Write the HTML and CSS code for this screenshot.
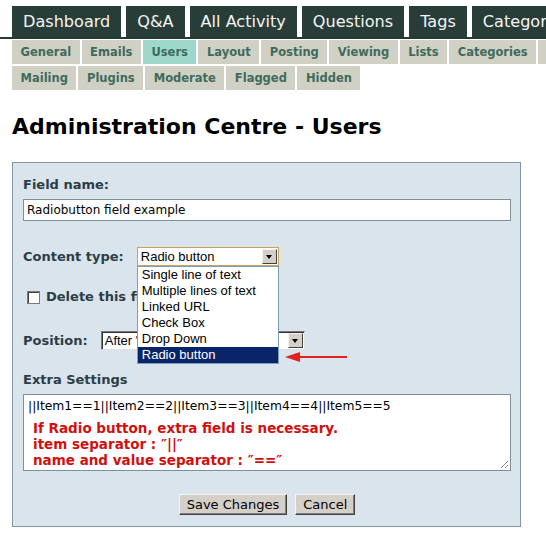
FILE: index.html
```html
<!DOCTYPE html>
<html lang="en">
<head>
    <meta charset="UTF-8">
    <meta name="viewport" content="width=device-width, initial-scale=1.0">
    <title>Administration Centre - Users</title>
    <link rel="stylesheet" href="styles.css">
</head>
<body>
    <nav class="main-nav">
        <a class="main-tab" href="#">Dashboard</a>
        <a class="main-tab" href="#">Q&amp;A</a>
        <a class="main-tab" href="#">All Activity</a>
        <a class="main-tab" href="#">Questions</a>
        <a class="main-tab" href="#">Tags</a>
        <a class="main-tab" href="#">Categories</a>
        <a class="main-tab" href="#">Users</a>
    </nav>

    <nav class="admin-nav">
        <div class="admin-row">
            <a class="admin-tab" href="#">General</a>
            <a class="admin-tab" href="#">Emails</a>
            <a class="admin-tab active" href="#">Users</a>
            <a class="admin-tab" href="#">Layout</a>
            <a class="admin-tab" href="#">Posting</a>
            <a class="admin-tab" href="#">Viewing</a>
            <a class="admin-tab" href="#">Lists</a>
            <a class="admin-tab" href="#">Categories</a>
            <a class="admin-tab" href="#">Permissions</a>
            <a class="admin-tab" href="#">Pages</a>
        </div>
        <div class="admin-row">
            <a class="admin-tab" href="#">Mailing</a>
            <a class="admin-tab" href="#">Plugins</a>
            <a class="admin-tab" href="#">Moderate</a>
            <a class="admin-tab" href="#">Flagged</a>
            <a class="admin-tab" href="#">Hidden</a>
        </div>
    </nav>

    <h1 class="page-title">Administration Centre - Users</h1>

    <form class="field-form">
        <label class="field-label" for="fieldName">Field name:</label>
        <input id="fieldName" class="text-input" type="text" value="Radiobutton field example">

        <div class="form-row type-row">
            <span class="field-label">Content type:</span>
            <div class="dropdown">
                <div class="select select-focused">
                    <span class="select-value">Radio button</span>
                    <span class="select-arrow"></span>
                </div>
                <ul class="dropdown-list">
                    <li>Single line of text</li>
                    <li>Multiple lines of text</li>
                    <li>Linked URL</li>
                    <li>Check Box</li>
                    <li>Drop Down</li>
                    <li class="selected">Radio button</li>
                </ul>
                <svg class="pointer-arrow" width="64" height="18" viewBox="0 0 64 18">
                    <line x1="12" y1="9" x2="62" y2="9" stroke="#e3201c" stroke-width="2"/>
                    <polygon points="0,9 15,4 15,14" fill="#e3201c"/>
                </svg>
            </div>
        </div>

        <label class="form-row check-row">
            <input type="checkbox" class="checkbox">
            <span>Delete this field</span>
        </label>

        <div class="form-row position-row">
            <span class="field-label">Position:</span>
            <div class="select select-wide">
                <span class="select-value">After "Radiobutton field"</span>
                <span class="select-arrow"></span>
            </div>
        </div>

        <div class="field-label extra-label">Extra Settings</div>
        <div class="textarea">
            <div class="textarea-line">||Item1==1||Item2==2||Item3==3||Item4==4||Item5==5</div>
            <p class="note">
                If Radio button, extra field is necessary.<br>
                item separator : ″||″<br>
                name and value separator : ″==″
            </p>
            <svg class="resize-grip" width="10" height="10" viewBox="0 0 10 10">
                <line x1="9" y1="2" x2="2" y2="9" stroke="#8a8a8a"/>
                <line x1="9" y1="6" x2="6" y2="9" stroke="#8a8a8a"/>
            </svg>
        </div>

        <div class="actions">
            <button type="submit" class="btn">Save Changes</button>
            <button type="button" class="btn">Cancel</button>
        </div>
    </form>
</body>
</html>
```

FILE: styles.css
```css
html,
body {
    overflow: hidden;
}

body {
    margin: 0;
    font-family: "DejaVu Sans", Verdana, sans-serif;
    background: #fff;
    color: #000;
}

/* top navigation */
.main-nav {
    display: flex;
    gap: 5px;
    padding: 6px 0 0 12px;
    border-bottom: 2px solid #263a35;
    white-space: nowrap;
}

.main-tab {
    flex: none;
    height: 31px;
    line-height: 31px;
    padding: 0 11px;
    background: #283d38;
    color: #f4f4f4;
    font-size: 16.1px;
    text-decoration: none;
}

/* admin sub navigation */
.admin-nav {
    display: flex;
    flex-direction: column;
    gap: 2px;
    margin-top: 1px;
    padding-left: 12px;
}

.admin-row {
    display: flex;
    gap: 2px;
    white-space: nowrap;
}

.admin-tab {
    flex: none;
    height: 24px;
    line-height: 24px;
    padding: 0 8.5px;
    background: #d0d0c5;
    color: #3e6b5c;
    font-size: 11.5px;
    font-weight: bold;
    text-decoration: none;
}

.admin-tab.active {
    background: #9ed8cb;
}

.page-title {
    margin: 24px 0 22px 12px;
    font-size: 22px;
    line-height: 26px;
}

/* field editor box */
.field-form {
    width: 509px;
    box-sizing: border-box;
    margin-left: 12px;
    padding: 13px 9px 11px 10px;
    background: #d9e4ec;
    border: 1px solid #8397a4;
}

.field-label {
    display: block;
    line-height: 18px;
    font-size: 13px;
    font-weight: bold;
    color: #2c3d47;
}

.text-input {
    display: block;
    width: 100%;
    height: 22px;
    box-sizing: border-box;
    margin: 5px 0 0;
    padding: 0 3px;
    border: 1px solid #7d909c;
    background: #fff;
    font-family: inherit;
    font-size: 12px;
    color: #000;
}

.form-row {
    display: flex;
    align-items: center;
}

.type-row {
    margin-top: 26px;
    height: 19px;
}

.type-row .field-label,
.position-row .field-label {
    margin-right: 13px;
}

.position-row {
    margin-top: 25px;
    height: 19px;
}

.check-row {
    margin-top: 22px;
    line-height: 18px;
    font-size: 13px;
    font-weight: bold;
    color: #2c3d47;
}

.checkbox {
    appearance: none;
    width: 13px;
    height: 13px;
    margin: 0 6px 0 4px;
    background: #fff;
    border: 1px solid #7b7b7b;
    box-shadow: inset 1px 1px #404040;
}

/* windows style select boxes */
.dropdown {
    position: relative;
}

.select {
    display: flex;
    width: 142px;
    height: 19px;
    box-sizing: border-box;
    background: #fff;
    border: 1px solid #808080;
    font-family: "Liberation Sans", Arial, sans-serif;
    font-size: 13px;
}

.select-focused {
    border-color: #c9a35b;
}

.select-wide {
    width: 204px;
    border-color: #7a7a7a #e0e0e0 #e0e0e0 #7a7a7a;
    box-shadow: inset 1px 1px #303030;
}

.select-value {
    flex: 1;
    overflow: hidden;
    white-space: nowrap;
    padding-left: 3px;
    line-height: 17px;
}

.select-arrow {
    position: relative;
    width: 15px;
    height: 15px;
    margin: 1px;
    box-sizing: border-box;
    background: #d4d0c8;
    border: 1px solid;
    border-color: #f4f4f4 #404040 #404040 #f4f4f4;
}

.select-arrow::after {
    content: "";
    position: absolute;
    left: 3px;
    top: 5px;
    border-top: 4px solid #000;
    border-left: 3.5px solid transparent;
    border-right: 3.5px solid transparent;
}

.dropdown-list {
    position: absolute;
    z-index: 10;
    top: 19px;
    left: 0;
    width: 142px;
    box-sizing: border-box;
    margin: 0;
    padding: 0;
    list-style: none;
    background: #fff;
    border: 1px solid #7f9db9;
    font-family: "Liberation Sans", Arial, sans-serif;
    font-size: 13px;
}

.dropdown-list li {
    height: 16px;
    line-height: 16px;
    padding-left: 4px;
}

.dropdown-list li.selected {
    background: #0a246a;
    color: #fff;
}

.pointer-arrow {
    position: absolute;
    z-index: 10;
    left: 148px;
    top: 101px;
}

.extra-label {
    margin-top: 21px;
}

.textarea {
    position: relative;
    height: 77px;
    box-sizing: border-box;
    margin-top: 5px;
    padding: 3px 4px;
    background: #fff;
    border: 1px solid #7d909c;
    font-size: 12.3px;
}

.textarea-line {
    line-height: 16px;
}

.note {
    margin: 6px 0 0 5px;
    line-height: 16px;
    font-size: 13.5px;
    font-weight: bold;
    color: #d0100e;
}

.resize-grip {
    position: absolute;
    right: 1px;
    bottom: 1px;
}

.actions {
    display: flex;
    justify-content: center;
    gap: 8px;
    margin-top: 23px;
}

.btn {
    height: 21px;
    padding: 0 7px;
    background: #d4d0c8;
    border: 1px solid;
    border-color: #f4f4f4 #404040 #404040 #f4f4f4;
    box-shadow: inset -1px -1px #808080;
    font-family: inherit;
    font-size: 13px;
    color: #000;
}
```
